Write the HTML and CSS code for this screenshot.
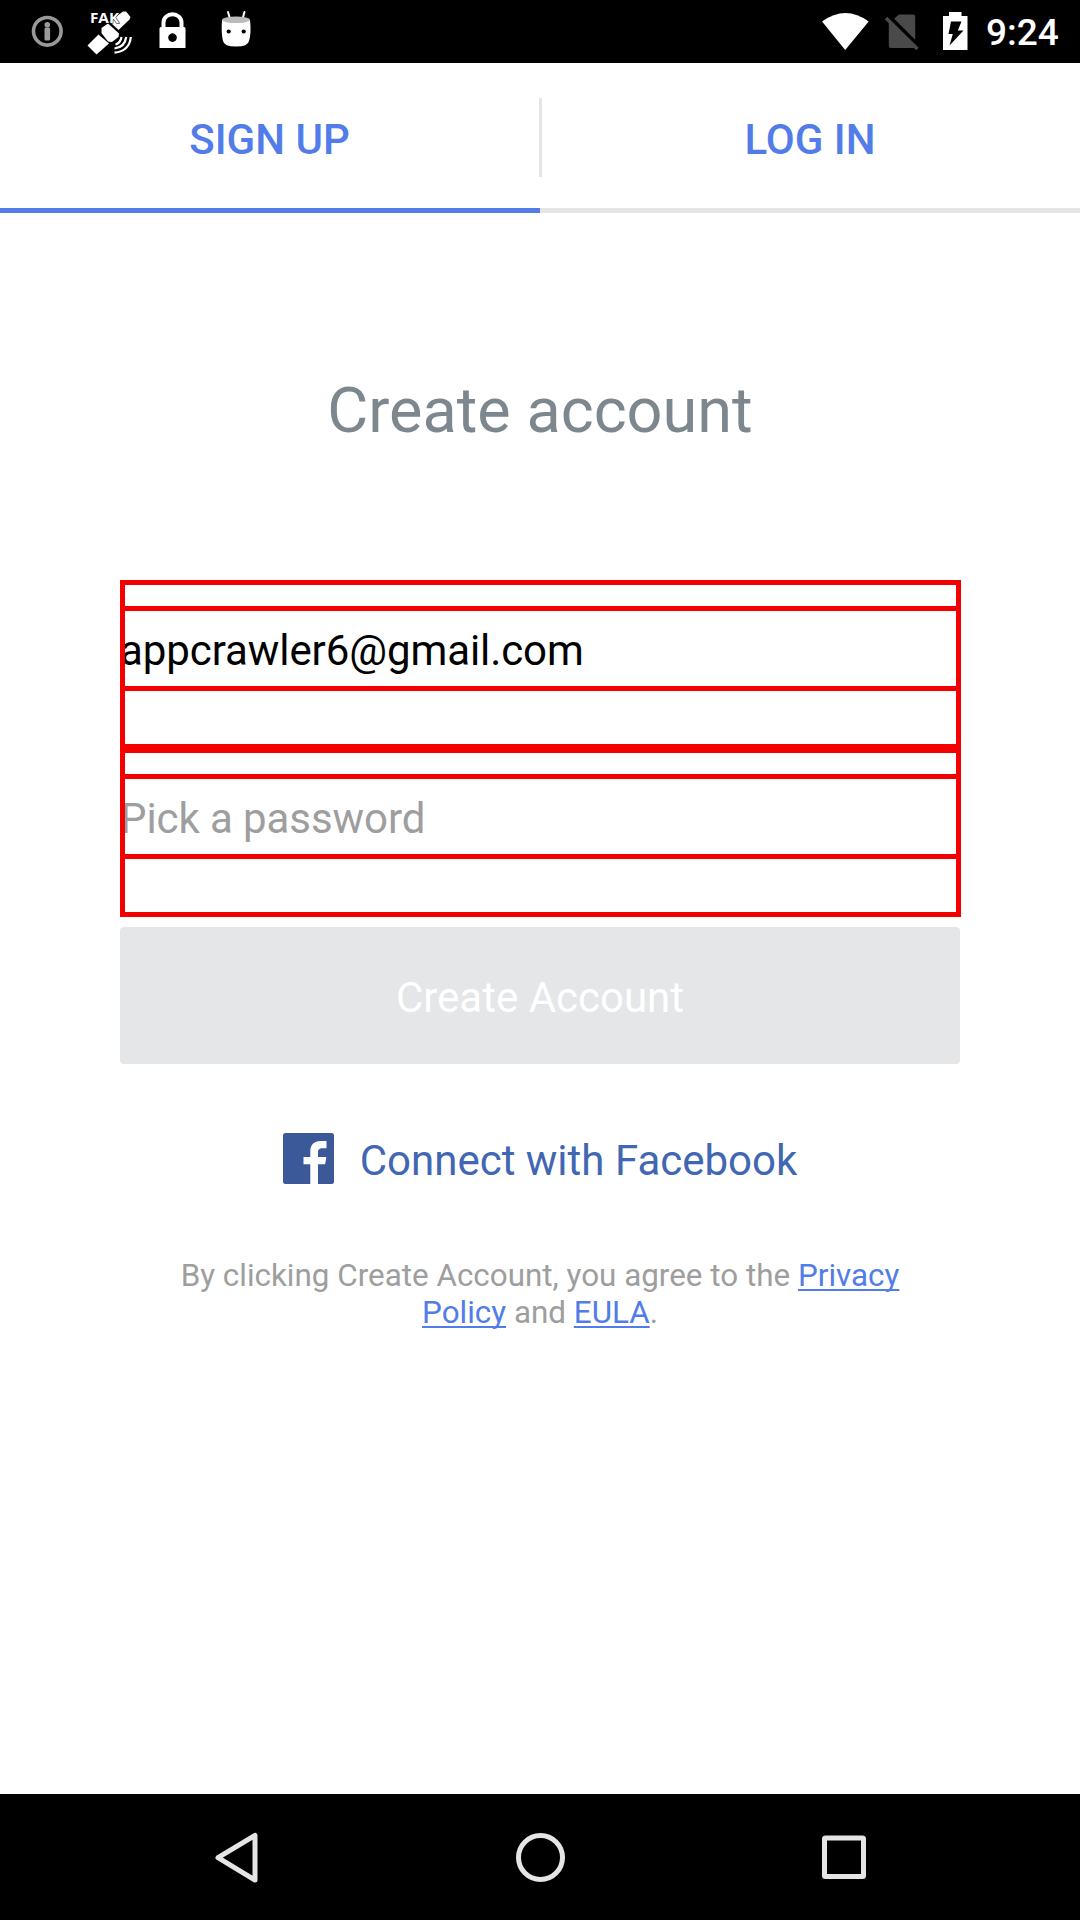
FILE: index.html
```html
<!DOCTYPE html>
<html lang="en">
<head>
<meta charset="utf-8">
<title>Create account</title>
<link rel="stylesheet" href="styles.css">
</head>
<body>
<div class="screen">
  <header class="status">
    <svg class="status-left" width="280" height="63" viewBox="0 0 280 63">
      <circle cx="47.3" cy="31.3" r="13.8" fill="none" stroke="#999" stroke-width="3.6"/>
      <circle cx="47.3" cy="24.8" r="2.8" fill="#999"/>
      <rect x="44.500" y="27.500" width="5.600" height="13" rx="1.5" fill="#999"/>
      <g fill="#fff">
        <path d="M123 11.500 126 11.500 130.500 17 129.500 19.500 118.500 30 109.500 21.500Z"/>
        <path d="M101.500 28 108 23.500 119 33.500 118.500 37 112 42 108 41.500 101.500 33Z"/>
        <path d="M98.500 34.500 109 43.500 96.500 54.500 87.500 45.500Z"/>
      </g>
      <g fill="none" stroke="#fff" stroke-width="2.2">
        <path d="M115.500 44.500Q120.500 43 121.500 37"/>
        <path d="M114.500 48.500Q125 47 126.200 37"/>
        <path d="M114.500 52.700Q129.500 51 130.800 37"/>
      </g>
      <text class="fake" x="90" y="23" textLength="29" lengthAdjust="spacingAndGlyphs">FAK</text>
      <path d="M163.500 28V22.500a9 8.300 0 0 1 18 0V28" fill="none" stroke="#fff" stroke-width="4"/>
      <path fill="#fff" fill-rule="evenodd" d="M161 27h23a1.500 1.500 0 0 1 1.500 1.500V48h-26V28.500a1.500 1.500 0 0 1 1.500-1.500ZM172.500 33.300a4.300 4.300 0 1 0 .01 0Z"/>
      <path d="M228 12 230 19M244.500 12 242.500 19" stroke="#fff" stroke-width="2" stroke-linecap="round"/>
      <path d="M222 20Q221 33 223 41Q224 46.500 236 46.500T249 41Q251.500 33 250 20Z" fill="#fff"/>
      <ellipse cx="236" cy="19.800" rx="14" ry="3.300" fill="#bbb"/>
      <circle cx="228.700" cy="31.500" r="2.100"/>
      <circle cx="243.700" cy="31.500" r="2.100"/>
    </svg>
    <div class="status-right">
      <svg width="170" height="63" viewBox="810 0 170 63">
        <path d="M822 21.500Q845.500 4.500 868.700 21.500L845.200 50Z" fill="#fff"/>
        <path d="M899 14.500h14a2.200 2.200 0 0 1 2.200 2.200V48H891a2.200 2.200 0 0 1-2.200-2.200V23Z" fill="#4a4a4a"/>
        <path d="M889 16.500 918 45.500" stroke="#000" stroke-width="4"/>
        <path d="M886 18 917.500 49" stroke="#4a4a4a" stroke-width="3.400"/>
        <path d="M949 12h12.500v4H967.500V50H943V16h6Z" fill="#fff"/>
        <path d="M951 21.500H961.500L957.800 30.500H963.500L949.500 45.500 952.800 34H948.500Z"/>
      </svg>
      <span class="clock">9:24</span>
    </div>
  </header>

  <nav class="tabs">
    <a class="tab tab-active">SIGN UP</a>
    <span class="tab-divider"></span>
    <a class="tab">LOG IN</a>
  </nav>

  <main class="content">
    <h1 class="title">Create account</h1>
    <form class="form">
      <div class="field"><div class="field-input email">appcrawler6@gmail.com</div></div>
      <div class="field"><div class="field-input hint">Pick a password</div></div>
      <button class="submit" type="button"><span>Create Account</span></button>
    </form>
    <a class="facebook">
      <svg width="51" height="51" viewBox="0 0 51 51">
        <rect width="51" height="51" rx="2.500" fill="#3b5998"/>
        <path d="M27.300 51V31.300H20.500V24H27.300V18.300C27.300 11.500 31.500 8 37.500 8H43.500V15.300H39.500C36 15.300 35 17 35 19.500V24H43.300L42.200 31.300H35V51Z" fill="#fff"/>
      </svg>
      <span>Connect with Facebook</span>
    </a>
    <p class="terms">By clicking Create Account, you agree to the <a>Privacy<br>Policy</a> and <a>EULA</a>.</p>
  </main>

  <footer class="navbar">
    <svg width="1080" height="126" viewBox="0 0 1080 126" fill="none" stroke="#e5e5e5" stroke-width="5" stroke-linejoin="round">
      <path d="M255 41.500V86L218 63.700Z"/>
      <circle cx="540.500" cy="63.500" r="22"/>
      <rect x="824.500" y="44" width="39" height="38.500" rx="1"/>
    </svg>
  </footer>
</div>
</body>
</html>
```
FILE: styles.css
```css
* { box-sizing: border-box; }
body { margin: 0; background: #fff; font-family: Roboto, sans-serif; }
.screen { width: 1080px; height: 1920px; display: flex; flex-direction: column; }

.status { height: 63px; background: #000; display: flex; justify-content: space-between; }
.status-right { display: flex; width: 270px; }
.status-right svg { flex: none; }
.fake { font: 700 14px "Open Sans", sans-serif; fill: #fff; stroke: #000; stroke-width: 1px; paint-order: stroke; }
.clock { margin-left: 6px; color: #fff; font-size: 37px; font-weight: 500; line-height: 66px; }

.tabs {
  height: 150px;
  display: flex;
  background: linear-gradient(#e5e5e5, #e5e5e5) bottom / 100% 5px no-repeat;
}
.tab {
  width: 536px;
  display: flex;
  justify-content: center;
  align-items: center;
  padding-top: 8px;
  border-bottom: 5px solid transparent;
  color: #527de9;
  font-size: 42px;
  font-weight: 500;
}
.tab-active { width: 540px; padding-right: 1px; border-color: #527de9; }
.tab-divider { width: 3px; height: 79px; margin: 35px 0 0 -1px; background: #e5e5e5; }

.content { flex: 1; display: flex; flex-direction: column; align-items: center; }
.title { margin: 158px 0 0; color: #7d888e; font-size: 63px; font-weight: 400; line-height: 80px; }
.form { width: 841px; margin: 129px 0 0 1px; display: flex; flex-direction: column; }
.field { height: 169px; padding-top: 21px; border: 5px solid #f40000; }
.field + .field { margin-top: -1px; }
.field-input {
  height: 85px;
  margin: 0 -5px;
  padding-top: 4px;
  border: 5px solid #f40000;
  line-height: 71px;
  font-size: 42px;
  letter-spacing: -0.08px;
  text-indent: -5px;
  overflow: hidden;
}
.email { color: #000; }
.hint { color: #9e9e9e; }
.submit {
  width: 840px;
  height: 137px;
  margin-top: 10px;
  padding: 4px 0 0;
  border: 0;
  border-radius: 4px;
  background: #e4e6e8;
  color: #fff;
  font: 400 42px Roboto, sans-serif;
}
.facebook { margin-top: 69px; height: 51px; display: flex; align-items: center; gap: 26px; color: #4267b2; font-size: 42px; }
.facebook span { padding-top: 3px; }
.terms { margin: 73px 0 0; color: #9e9e9e; font-size: 31.400px; line-height: 37px; text-align: center; }
.terms a { color: #527de9; text-decoration: underline; text-decoration-thickness: 2px; text-underline-offset: 3px; text-decoration-skip-ink: none; }

.navbar { height: 126px; background: #000; }
.navbar svg { display: block; }
```
